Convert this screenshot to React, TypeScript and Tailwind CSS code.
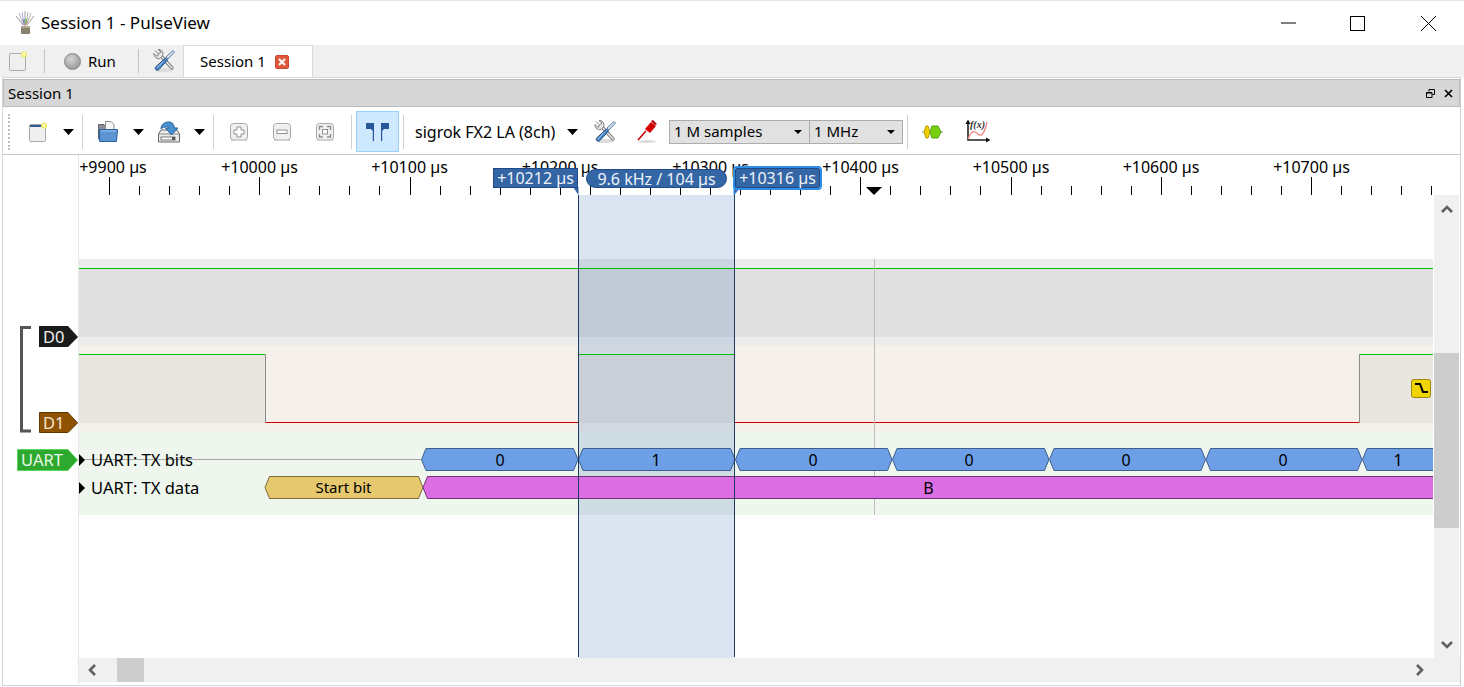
import React from "react";

/* =======================
   ICONS
======================= */
const AppIcon = () => (
  <svg width="22" height="24" viewBox="0 0 22 24">
    <g strokeWidth="1" fill="none">
      <path d="M9 14 L2 5" stroke="#9a9a9a" />
      <path d="M9.5 14 L5 2" stroke="#b5b5b5" />
      <path d="M10 14 L8 1" stroke="#c0a0d8" />
      <path d="M11 14 L11 0" stroke="#9a9a9a" />
      <path d="M12 14 L14 1" stroke="#a8a8a8" />
      <path d="M12.5 14 L17 2" stroke="#b5b5b5" />
      <path d="M13 14 L20 5" stroke="#9a9a9a" />
    </g>
    <path d="M8 8 L10 15 H12 L14 8 Z" fill="#d66" opacity="0.5" />
    <path d="M9 8 L10 15 L11 8 Z" fill="#5aa8e0" />
    <path d="M11 8 L11 15 L13 8 Z" fill="#78c850" />
    <rect x="7" y="15" width="9" height="8" rx="1" fill="#8a8270" />
    <rect x="7" y="15" width="9" height="2" fill="#b0a890" />
  </svg>
);

const NewIcon = ({ bar = false }: { bar?: boolean }) => (
  <svg width="18" height="20" viewBox="0 0 18 20">
    <rect x="0.5" y="2.5" width="16" height="17" rx="1" fill="#efefef" stroke="#a8a8a8" />
    {bar && <rect x="1" y="3" width="15" height="2" fill="#2f5a94" />}
    <circle cx="15" cy="3.5" r="3" fill="#f4ec60" />
    <circle cx="15" cy="3.5" r="1.4" fill="#fdfbd0" />
  </svg>
);

const DropArrow = () => (
  <svg width="11" height="6" viewBox="0 0 11 6">
    <path d="M0 0 H11 L5.5 6 Z" fill="#000" />
  </svg>
);

const ToolsIcon = () => (
  <svg width="22" height="24" viewBox="0 0 22 24">
    <ellipse cx="11" cy="21" rx="9" ry="2" fill="#dcdcdc" />
    <path d="M19 19 L8 7" stroke="#7b7b7b" strokeWidth="3.4" strokeLinecap="round" />
    <path d="M19 19 L8 7" stroke="#e8e8e8" strokeWidth="1.6" strokeLinecap="round" />
    <path d="M2 1.5 L5.5 5 L8 3 L5 0.6 C8 0 11 3 9.5 7 L7 9.5 C3 10.5 0.5 7 1 4.5 L4 7.5 L5.5 5" fill="#e8e8e8" stroke="#7b7b7b" strokeWidth="1" />
    <path d="M20 1.5 L21.5 3 L15 10 L13 8 Z" fill="#e4e4e4" stroke="#4a7ab0" strokeWidth="1" />
    <path d="M12.5 9 L14.5 11 L6 20.5 C4 22.5 1 20 2.8 17.8 Z" fill="#4a86c8" stroke="#23527f" strokeWidth="1" />
    <path d="M4 19 L10 12.5" stroke="#a8ccec" strokeWidth="1" />
  </svg>
);

const OpenIcon = () => (
  <svg width="20" height="22" viewBox="0 0 20 22">
    <path d="M0.5 3.5 H6 L7 5 H15.5 V18 H0.5 Z" fill="#8a8f96" stroke="#5f6368" />
    <path d="M7.5 0.5 H13 L16 3.5 V10 H7.5 Z" fill="#f4f4f4" stroke="#8a8a8a" />
    <path d="M1.5 8.5 H19.5 L18.5 20.5 H1.5 Z" fill="#5b93d3" stroke="#2e5f9e" />
    <path d="M3 10 H18" stroke="#9cc3ea" />
  </svg>
);

const SaveIcon = () => (
  <svg width="22" height="22" viewBox="0 0 22 22">
    <path d="M0.5 13 L3 9 H19 L21.5 13 V21 H0.5 Z" fill="#ececec" stroke="#666" />
    <path d="M0.5 13 H21.5" stroke="#888" />
    <rect x="3" y="16" width="14" height="3" fill="#fff" stroke="#777" />
    <rect x="14" y="16" width="3" height="3" fill="#555" />
    <path d="M3 8 C3 3 7 1 11 1 C14 1 16 3 16.5 7 H20 L13.5 14 L7.5 7 H11 C11 6 9 5.5 7 6 C5 6.5 4 7 3 8 Z" fill="#4a90d0" stroke="#28609c" />
  </svg>
);

const ZoomButton = ({ kind }: { kind: "in" | "out" | "fit" }) => (
  <svg width="18" height="18" viewBox="0 0 18 18">
    <rect x="0.5" y="0.5" width="17" height="16.5" rx="3" fill="#f0f0f0" stroke="#a8a8a8" />
    <path d="M1 17.5 H17" stroke="#d4d4d4" />
    {kind === "in" && <path d="M7 4 H11 V7 H14 V11 H11 V14 H7 V11 H4 V7 H7 Z" fill="#fff" stroke="#909090" />}
    {kind === "out" && <rect x="4" y="7" width="10" height="3.5" fill="#fff" stroke="#909090" />}
    {kind === "fit" && (
      <g fill="none" stroke="#909090" strokeWidth="1.4">
        <path d="M3.5 7 V3.5 H7" />
        <path d="M11 3.5 H14.5 V7" />
        <path d="M14.5 11 V14 H11" />
        <path d="M7 14 H3.5 V11" />
        <rect x="6.5" y="6.5" width="5" height="4.5" fill="#fff" strokeWidth="1" />
      </g>
    )}
  </svg>
);

const CursorsIcon = () => (
  <svg width="23" height="18" viewBox="0 0 23 18">
    <path d="M0 0 H8 V18 H6.8 V8 L5 6 H0 Z" fill="#27579b" />
    <path d="M23 0 H15 V18 H16.2 V8 L18 6 H23 Z" fill="#27579b" />
  </svg>
);

const ProbeIcon = () => (
  <svg width="20" height="24" viewBox="0 0 20 24">
    <ellipse cx="10" cy="21.5" rx="9" ry="1.5" fill="#dadada" />
    <path d="M1 20 L9 11" stroke="#c00000" strokeWidth="1.6" />
    <path d="M8 9 L14 2 L19 6 L13 13 Z" fill="#d40000" />
    <path d="M14 1 L16 0 L20 4 L18 5 Z" fill="#a80000" />
  </svg>
);

const DecoderIcon = () => (
  <svg width="21" height="14" viewBox="0 0 21 14">
    <path d="M0 7 H21" stroke="#8a8a8a" />
    <path d="M2 7 L4 1 H6 L8 7 L6 13 H4 Z" fill="#f0d000" stroke="#b8a000" />
    <path d="M8 7 L10 1 H16 L19 7 L16 13 H10 Z" fill="#76d010" stroke="#5ca808" />
  </svg>
);

const MathIcon = () => (
  <svg width="26" height="26" viewBox="0 0 26 26">
    <path d="M3 2 V21 H22" fill="none" stroke="#222" strokeWidth="1.6" />
    <path d="M0.5 5 L3 0.5 L5.5 5 Z" fill="#111" />
    <path d="M21 18.5 L25.5 21 L21 23.5 Z" fill="#111" />
    <path d="M3 20 C7 10 10 12 13 15 C17 19 20 12 22 3" fill="none" stroke="#f08080" strokeWidth="1.2" />
    <text x="5" y="9" fontSize="10" fontStyle="italic" fontWeight="700" fontFamily="'Liberation Serif', serif" fill="#333">f(x)</text>
  </svg>
);

const Chevron = ({ d }: { d: string }) => (
  <svg width="12" height="12" viewBox="0 0 12 12">
    <path d={d} fill="none" stroke="#606060" strokeWidth="2.6" />
  </svg>
);

/* =======================
   DATA
======================= */
const majorTicks = [109, 259.25, 409.5, 559.75, 710, 860.25, 1010.5, 1160.75, 1311];
const rulerLabels = [
  { x: 113, t: "+9900 µs" },
  { x: 259.5, t: "+10000 µs" },
  { x: 409.5, t: "+10100 µs" },
  { x: 560, t: "+10200 µs" },
  { x: 710.5, t: "+10300 µs" },
  { x: 860.5, t: "+10400 µs" },
  { x: 1011, t: "+10500 µs" },
  { x: 1161, t: "+10600 µs" },
  { x: 1311.5, t: "+10700 µs" },
];
const minorTicks = Array.from({ length: 45 }, (_, i) => 109 + i * 30.05).filter((_, i) => i % 5 !== 0);

const bitBlocks = [
  { a: 421.5, b: 578, t: "0", c: 500 },
  { a: 578.5, b: 735, t: "1", c: 656 },
  { a: 735.5, b: 892, t: "0", c: 813 },
  { a: 892.5, b: 1049, t: "0", c: 969 },
  { a: 1049.5, b: 1205.5, t: "0", c: 1126 },
  { a: 1206, b: 1362, t: "0", c: 1283 },
  { a: 1362.5, b: 1440, t: "1", c: 1398 },
];

const blockPath = (a: number, b: number, top: number, bottom: number) => {
  const mid = (top + bottom) / 2;
  return `M${a} ${mid} L${a + 4.5} ${top} H${b - 4.5} L${b} ${mid} L${b - 4.5} ${bottom} H${a + 4.5} Z`;
};

const FONT = "'Noto Sans', 'Open Sans', sans-serif";

/* =======================
   PARTS
======================= */
const Sep = ({ ml }: { ml: string }) => <div className={`${ml} w-px h-[34px] bg-[#d0d0d0]`} />;

const Combo = ({ label, w }: { label: string; w: string }) => (
  <div className={`${w} h-6 flex items-center justify-between bg-[#e1e1e1] border border-[#adadad] pl-[4px] pr-[7px]`}>
    <span>{label}</span>
    <svg width="8" height="4" viewBox="0 0 8 4">
      <path d="M0 0 H8 L4 4 Z" fill="#000" />
    </svg>
  </div>
);

const Flag = ({ text, left, active }: { text: string; left: string; active?: boolean }) => (
  <div
    className={
      active
        ? `absolute ${left} top-[13px] h-[20px] w-[85px] flex items-center justify-center rounded-[2px] bg-[#3465a4] border border-[#204a87] outline-2 outline-[#2f8fe6] text-[#eef3fa] text-[16px]`
        : `absolute ${left} top-[13px] h-[20px] w-[85px] flex items-center justify-center bg-[#3465a4] border border-[#204a87] text-[#eef3fa] text-[16px]`
    }
  >
    {text}
  </div>
);

/* =======================
   COMPONENT
======================= */
export default function App() {
  return (
    <div
      className="w-[1464px] h-[687px] bg-white overflow-hidden flex flex-col text-[15px] leading-none text-black"
      style={{ fontFamily: FONT }}
    >
      {/* window title */}
      <div className="h-[45px] flex items-center border-t border-[#e6e6e6]">
        <div className="ml-[14px] mt-[-1px]">
          <AppIcon />
        </div>
        <span className="ml-[5px] mb-[2px] text-[17px]">Session 1 - PulseView</span>
        <svg className="ml-auto" width="15" height="2" viewBox="0 0 15 2">
          <path d="M0 1 H15" stroke="#000" />
        </svg>
        <svg className="ml-[54px]" width="15" height="15" viewBox="0 0 15 15">
          <rect x="0.5" y="0.5" width="14" height="14" fill="none" stroke="#000" />
        </svg>
        <svg className="ml-[56px] mr-[28px]" width="15" height="15" viewBox="0 0 15 15">
          <path d="M0 0 L15 15 M15 0 L0 15" stroke="#000" />
        </svg>
      </div>

      {/* session toolbar */}
      <div className="h-[32px] flex items-center bg-[#f0f0f0]">
        <div className="ml-[9px]">
          <NewIcon />
        </div>
        <div className="ml-[17px] w-px h-6 bg-[#c4c4c4]" />
        <div className="ml-[19px] w-[17px] h-[17px] rounded-full bg-[radial-gradient(circle_at_40%_35%,#d4d4d4,#8a8a8a)] border border-[#858585]" />
        <span className="ml-[7px] w-[28px]">Run</span>
        <div className="ml-[22px] w-px h-6 bg-[#c4c4c4]" />
        <div className="ml-[14px]">
          <ToolsIcon />
        </div>
        <div className="ml-[8px] w-[130px] self-stretch flex items-center bg-white border-x border-t border-[#dcdcdc] pl-[16px]">
          <span>Session 1</span>
          <div className="ml-[9px] w-[14px] h-[14px] flex items-center justify-center bg-[#e0583c] border border-[#c94a30] rounded-[2px]">
            <svg width="8" height="8" viewBox="0 0 8 8">
              <path d="M1 1 L7 7 M7 1 L1 7" stroke="#fff" strokeWidth="2" />
            </svg>
          </div>
        </div>
      </div>

      {/* dock */}
      <div className="ml-[2px] w-[1459px] h-[609px] border border-[#d8d8d8] border-r-[#cfcfcf] pt-px flex flex-col">
        <div className="h-[28px] flex items-center bg-[#d7d7d7] border border-[#bcbcbc] pl-[4px] pr-[6px]">
          <span>Session 1</span>
          <svg className="ml-auto" width="9" height="9" viewBox="0 0 9 9">
            <path d="M3 2.5 V0.5 H8.5 V5.5 H6.5 M0.5 3.5 H6 V8.5 H0.5 Z M0.5 4 H6" fill="none" stroke="#000" />
          </svg>
          <svg className="ml-[9px]" width="9" height="9" viewBox="0 0 9 9">
            <path d="M1 1 L8 8 M8 1 L1 8" stroke="#000" strokeWidth="1.6" />
          </svg>
        </div>

        {/* device toolbar */}
        <div className="h-[48px] flex items-center border-b border-[#c8c8c8] bg-white pt-[2px]">
          <div className="ml-[5px] w-[2px] h-[36px] border-l-2 border-dotted border-[#c0c0c0]" />
          <div className="ml-[19px]">
            <NewIcon bar />
          </div>
          <div className="ml-[16px]">
            <DropArrow />
          </div>
          <Sep ml="ml-[8px]" />
          <div className="ml-[15px]">
            <OpenIcon />
          </div>
          <div className="ml-[15px]">
            <DropArrow />
          </div>
          <div className="ml-[14px]">
            <SaveIcon />
          </div>
          <div className="ml-[14px]">
            <DropArrow />
          </div>
          <Sep ml="ml-[8px]" />
          <div className="ml-[16px]">
            <ZoomButton kind="in" />
          </div>
          <div className="ml-[25px]">
            <ZoomButton kind="out" />
          </div>
          <div className="ml-[25px]">
            <ZoomButton kind="fit" />
          </div>
          <Sep ml="ml-[17px]" />
          <div className="ml-[4px] w-[43px] h-[41px] flex items-center justify-center bg-[#cde8ff] border border-[#99d1ff]">
            <CursorsIcon />
          </div>
          <Sep ml="ml-[4px]" />
          <span className="ml-[11px] w-[141px] whitespace-nowrap text-[16px]">sigrok FX2 LA (8ch)</span>
          <div className="ml-[11px]">
            <DropArrow />
          </div>
          <div className="ml-[16px]">
            <ToolsIcon />
          </div>
          <div className="ml-[21px]">
            <ProbeIcon />
          </div>
          <div className="ml-[12px] flex">
            <Combo label="1 M samples" w="w-[141px]" />
            <Combo label="1 MHz" w="w-[94px] -ml-px" />
          </div>
          <Sep ml="ml-[4px]" />
          <div className="ml-[14px]">
            <DecoderIcon />
          </div>
          <div className="ml-[22px]">
            <MathIcon />
          </div>
        </div>

        {/* traces */}
        <div className="flex flex-1 min-h-0">
          {/* trace headers */}
          <div className="w-[76px] border-r border-[#e8e8e8]">
            <svg width="75" height="300" viewBox="3 155 75 300" className="overflow-visible">
              <path d="M31 327.5 H21.5 V431 H31" fill="none" stroke="#555" strokeWidth="3" />
              <path d="M39 326 H68 L78 337 L68 347 H39 Z" fill="#1a1c1c" />
              <text x="43" y="343" fontSize="16.5" fill="#eee">D0</text>
              <path d="M39.5 412.5 H68 L77.5 423 L68 432.5 H39.5 Z" fill="#8f5202" stroke="#5f3700" />
              <text x="43" y="429" fontSize="16.5" fill="#f2e6d2">D1</text>
              <path d="M17.5 449.5 H68 L77.5 460 L68 470.5 H17.5 Z" fill="#2fa82f" stroke="#58d858" strokeWidth="1" />
              <text x="21" y="466" fontSize="16.5" fill="#e6f8e6">UART</text>
            </svg>
          </div>

          <div className="flex-1 flex flex-col min-w-0">
            {/* ruler */}
            <div className="relative h-[40px] shrink-0">
              <svg width="1380" height="40" viewBox="79 155 1380 40">
                {rulerLabels.map((l) => (
                  <text key={l.t} x={l.x} y="173" fontSize="16" textAnchor="middle" fill="#000">
                    {l.t}
                  </text>
                ))}
                {majorTicks.map((x) => (
                  <path key={x} d={`M${Math.round(x) + 0.5} 177 V195`} stroke="#000" />
                ))}
                {minorTicks.map((x) => (
                  <path key={x} d={`M${Math.round(x) + 0.5} 186 V195`} stroke="#000" />
                ))}
                <path d="M866 187 H882 L874 195 Z" fill="#000" />
                <path d="M573 187 H578.5 V195 Z" fill="#3465a4" />
                <path d="M734 195 V186 H741 Z" fill="#3465a4" stroke="#2f8fe6" />
              </svg>
              <Flag text="+10212 µs" left="left-[414px]" />
              <div className="absolute left-[507px] top-[14px] w-[141px] h-[19px] flex items-center justify-center rounded-full bg-[#3465a4] border border-[#204a87] text-[#eef3fa] text-[16px]">
                9.6 kHz / 104 µs
              </div>
              <Flag text="+10316 µs" left="left-[656px]" active />
            </div>

            <div className="flex h-[463px]">
              {/* viewport */}
              <div className="relative w-[1354px] overflow-hidden">
                <div className="h-[64px] bg-white" />
                <div className="h-[86px] bg-[#ececec] pt-[9px]">
                  <div className="h-[69px] bg-[#e0e0e0]" />
                </div>
                <div className="h-[86px] bg-[#f5f0ea]">
                  <svg width="1354" height="86" viewBox="79 345 1354 86" className="block">
                    <rect x="79" y="354" width="186" height="69" fill="#e9e5df" />
                    <rect x="578" y="354" width="156" height="69" fill="#e9e5df" />
                    <rect x="1360" y="354" width="74" height="69" fill="#e9e5df" />
                  </svg>
                </div>
                <div className="h-[84px] bg-[#eef6ee]" />

                {/* cursor area */}
                <div className="absolute left-[499px] top-0 w-[156px] h-full bg-[#376eb2]/18" />

                {/* waveforms and decoder rows */}
                <svg className="absolute left-0 top-0" width="1354" height="463" viewBox="79 195 1354 463">
                  <path d="M79 268.5 H1434" stroke="#00c000" />
                  <path d="M79 354.5 H265.5" stroke="#00c000" />
                  <path d="M265.5 354.5 V422.5" stroke="#8a8a8a" />
                  <path d="M265.5 422.5 H578.5" stroke="#cc0000" />
                  <path d="M578.5 422.5 V354.5" stroke="#8a8a8a" />
                  <path d="M578.5 354.5 H734.5" stroke="#00c000" />
                  <path d="M734.5 354.5 V422.5" stroke="#8a8a8a" />
                  <path d="M734.5 422.5 H1359.5" stroke="#cc0000" />
                  <path d="M1359.5 422.5 V354.5" stroke="#8a8a8a" />
                  <path d="M1359.5 354.5 H1434" stroke="#00c000" />

                  <path d="M874.5 259 V515" stroke="#bdbdbd" />

                  <path d="M79 459.5 H421" stroke="#a8a8a8" />
                  <path d="M79 454 L85 460 L79 466 Z" fill="#000" />
                  <path d="M79 482 L85 488 L79 494 Z" fill="#000" />
                  <text x="91" y="465.5" fontSize="16.5" fill="#000">UART: TX bits</text>
                  <text x="91" y="493.5" fontSize="16.5" fill="#000">UART: TX data</text>

                  {bitBlocks.map((b) => (
                    <g key={b.a}>
                      <path d={blockPath(b.a, b.b, 448.5, 470.5)} fill="#6c9fe6" stroke="#3f5f90" />
                      <text x={b.c} y="465.5" fontSize="16" textAnchor="middle" fill="#000">
                        {b.t}
                      </text>
                    </g>
                  ))}
                  <path d={blockPath(265, 423, 476.5, 498.5)} fill="#e6c86e" stroke="#7d6c34" />
                  <text x="343.5" y="493" fontSize="15" textAnchor="middle" fill="#000">Start bit</text>
                  <path d={blockPath(423, 1450, 476.5, 498.5)} fill="#dc6ee4" stroke="#6e3272" />
                  <text x="928.5" y="493.5" fontSize="16" textAnchor="middle" fill="#000">B</text>

                  <path d="M578.5 195 V657" stroke="#1d3a60" />
                  <path d="M734.5 195 V657" stroke="#1d3a60" />

                  <rect x="1411.5" y="379.5" width="19" height="18" rx="2" fill="#f0d400" stroke="#9a8a10" />
                  <path d="M1415 384 H1420 L1423 392 H1428" fill="none" stroke="#000" strokeWidth="2" />
                </svg>
              </div>

              {/* vertical scrollbar */}
              <div className="w-[26px] bg-[#f0f0f0] border-l border-white flex flex-col items-center">
                <div className="h-[158px] pt-[8px]">
                  <Chevron d="M1 9 L6 4 L11 9" />
                </div>
                <div className="w-full h-[175px] bg-[#cdcdcd]" />
                <div className="mt-[111px]">
                  <Chevron d="M1 3 L6 8 L11 3" />
                </div>
              </div>
            </div>

            {/* horizontal scrollbar */}
            <div className="h-[24px] bg-[#f0f0f0] flex items-center">
              <div className="ml-[7px]">
                <Chevron d="M9 1 L4 6 L9 11" />
              </div>
              <div className="ml-[19px] w-[27px] h-full bg-[#cdcdcd]" />
              <div className="ml-auto mr-[34px]">
                <Chevron d="M3 1 L8 6 L3 11" />
              </div>
            </div>
          </div>
        </div>
      </div>
    </div>
  );
}
